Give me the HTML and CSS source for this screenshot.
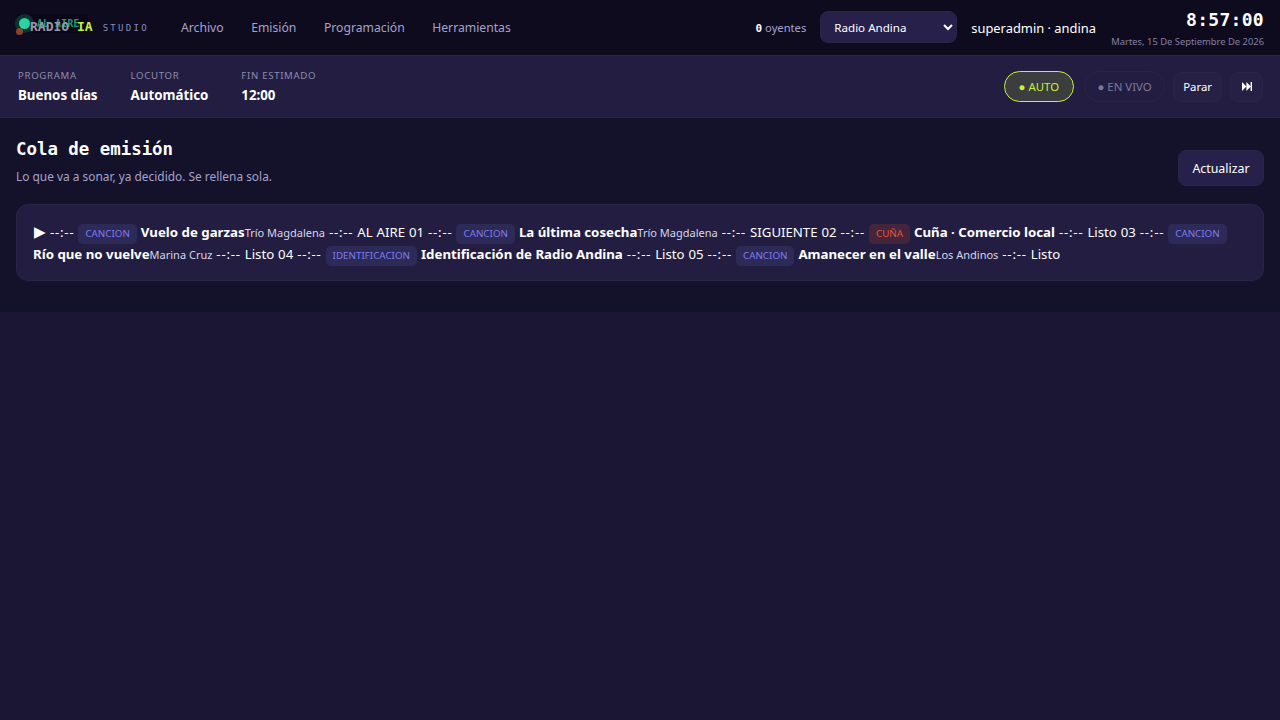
FILE: index.html
```html
<!DOCTYPE html>
<html lang="es">
<head>
<meta charset="utf-8">
<title>Radio IA Studio</title>
<link rel="stylesheet" href="styles.css">
</head>
<body>
<header class="top">
  <div class="brand">
    <div class="onair"><span class="onair-dot"></span><span class="onair-text">AL AIRE</span></div>
    <span class="orange-dot"></span>
    <span class="logo">RADIO <em>IA</em></span>
    <span class="studio">STUDIO</span>
  </div>
  <nav class="nav"><a>Archivo</a><a>Emisión</a><a>Programación</a><a>Herramientas</a></nav>
  <div class="top-right">
    <span class="listeners"><b>0</b> oyentes</span>
    <select class="station"><option>Radio Andina</option></select>
    <span class="user">superadmin · andina</span>
    <div class="clock"><div class="time">8:57:00</div><div class="date">Martes, 15 De Septiembre De 2026</div></div>
  </div>
</header>
<section class="status">
  <div class="metas">
    <div class="meta"><span class="label">PROGRAMA</span><strong>Buenos días</strong></div>
    <div class="meta"><span class="label">LOCUTOR</span><strong>Automático</strong></div>
    <div class="meta"><span class="label">FIN ESTIMADO</span><strong>12:00</strong></div>
  </div>
  <div class="controls">
    <button class="pill auto">● AUTO</button>
    <button class="pill live">● EN VIVO</button>
    <button class="ctl">Parar</button>
    <button class="ctl skip" aria-label="Saltar"><svg class="skip-icon" viewBox="0 0 10 9" aria-hidden="true"><path d="M0 0L4.4 4.5L0 9Z M4.4 0L8.8 4.5L4.4 9Z M8.6 0H10V9H8.6Z"/></svg></button>
  </div>
</section>
<main class="main">
  <div class="head">
    <div>
      <h1>Cola de emisión</h1>
      <p>Lo que va a sonar, ya decidido. Se rellena sola.</p>
    </div>
    <button class="refresh">Actualizar</button>
  </div>
  <div class="queue">
    <span class="play">▶</span> <span class="t">--:--</span> <span class="tag">CANCION</span> <strong>Vuelo de garzas</strong><small>Trío Magdalena</small> <span class="t">--:--</span> AL AIRE 01 <span class="t">--:--</span> <span class="tag">CANCION</span> <strong>La última cosecha</strong><small>Trío Magdalena</small> <span class="t">--:--</span> SIGUIENTE 02 <span class="t">--:--</span> <span class="tag red">CUÑA</span> <strong>Cuña · Comercio local</strong> <span class="t">--:--</span> Listo 03 <span class="t">--:--</span> <span class="tag">CANCION</span> <strong>Río que no vuelve</strong><small>Marina Cruz</small> <span class="t">--:--</span> Listo 04 <span class="t">--:--</span> <span class="tag">IDENTIFICACION</span> <strong>Identificación de Radio Andina</strong> <span class="t">--:--</span> Listo 05 <span class="t">--:--</span> <span class="tag">CANCION</span> <strong>Amanecer en el valle</strong><small>Los Andinos</small> <span class="t">--:--</span> Listo
  </div>
</main>
</body>
</html>
```
FILE: styles.css
```css
* { box-sizing: border-box; }
html, body { margin: 0; height: 100%; }
body {
  background: #1a1633;
  color: #fff;
  font-family: "Noto Sans", sans-serif;
  font-size: 13px;
  overflow: hidden;
}
.top {
  height: 56px;
  display: flex;
  align-items: center;
  padding: 0 16px;
  background: #0e0b1f;
  border-bottom: 1px solid #2a2545;
}
.brand { position: relative; display: flex; align-items: baseline; width: 137px; flex: none; padding-left: 14px; margin-bottom: 2px; }
.onair {
  position: absolute;
  left: 0;
  top: -5px;
  width: 72px;
  height: 19px;
  display: flex;
  align-items: center;
  gap: 7px;
  padding-left: 3px;
  background: rgba(0,0,0,.25);
  border-radius: 4px;
}
.onair-dot { width: 11px; height: 11px; border-radius: 50%; background: #2dd4a0; box-shadow: 0 0 0 4px rgba(45,212,160,.2); flex: none; }
.onair-text { font: 700 9.6px "DejaVu Sans Mono", monospace; letter-spacing: .3px; color: #1f9a76; }
.orange-dot { position: absolute; left: 0; top: 9px; width: 7px; height: 7px; border-radius: 50%; background: #a5502f; opacity: .8; }
.logo { position: relative; font: 700 13px "DejaVu Sans Mono", monospace; color: #9a97ab; white-space: pre; }
.logo em { font-style: normal; color: #c8f135; }
.studio { font: 400 9px "DejaVu Sans Mono", monospace; letter-spacing: 2.3px; color: #8d8ab8; margin-left: 10px; }
.nav { display: flex; gap: 27.5px; margin-left: 28px; }
.nav a { color: #a7a2cc; font-size: 12.2px; }
.top-right { margin-left: auto; display: flex; align-items: center; }
.listeners { font-size: 11.2px; color: #a7a2cc; }
.listeners b { font-family: "DejaVu Sans Mono", monospace; font-size: 11px; color: #fff; }
.station {
  margin-left: 14px;
  margin-bottom: 1px;
  width: 137px;
  height: 32px;
  padding: 0 9px;
  background: #26204a;
  border: 1px solid #2a2545;
  border-radius: 8px;
  color: #fff;
  font: 11.6px "Noto Sans", sans-serif;
}
.user { margin-left: 14px; font-size: 12.9px; }
.clock { margin-left: 14px; text-align: right; width: 154px; margin-top: 3px; }
.time { font: 700 18px/20px "DejaVu Sans Mono", monospace; letter-spacing: .3px; }
.date { font-size: 9.4px; line-height: 13px; color: #8380a3; margin-top: 5px; white-space: nowrap; }
.status {
  height: 62px;
  display: flex;
  align-items: center;
  justify-content: space-between;
  padding: 0 17px 0 18px;
  background: #231e41;
  border-bottom: 1px solid #2a2545;
}
.metas { display: flex; gap: 33px; }
.meta { display: flex; flex-direction: column; gap: 3px; }
.label { font-size: 9.6px; letter-spacing: .7px; line-height: 14px; color: #8f8bb0; }
.meta strong { font-size: 13.3px; font-weight: 700; line-height: 19px; }
.controls { display: flex; align-items: center; gap: 8px; }
button { font-family: inherit; color: #fff; cursor: pointer; }
.pill { height: 31px; border-radius: 16px; font-size: 11.4px; padding: 0 14px; background: transparent; border: 1px solid #2a2545; }
.auto { color: #c8f135; border-color: #c8f135; background: rgba(200,241,53,.15); }
.live { color: #7c7899; border-color: #2a2545; margin-left: 2px; padding: 0 12.5px; }
.ctl { height: 30px; border-radius: 8px; background: #262045; border: 1px solid #2a2545; font-size: 11.4px; padding: 0 9px; }
.skip { width: 33px; padding: 0; display: flex; align-items: center; justify-content: center; }
.skip-icon { width: 10px; height: 9px; fill: #fff; }
.main { height: 194px; padding: 20px 16px; background: #14112a; }
.head { display: flex; justify-content: space-between; align-items: flex-end; }
h1 { margin: 1px 0 0; font: 700 17.4px/21px "DejaVu Sans Mono", monospace; }
p { margin: 7px 0 1px; font-size: 11.9px; line-height: 18px; color: #a7a2cc; }
.refresh { height: 36px; width: 86px; padding: 0; font-size: 12.4px; background: #26204a; border: 1px solid #2a2545; border-radius: 8px; }
.queue {
  margin-top: 18px;
  padding: 16px 16px 15px;
  background: #231e41;
  border: 1px solid #2a2545;
  border-radius: 12px;
  font-size: 13.2px;
  line-height: 22px;
  word-spacing: .5px;
}
.play { font-size: 15px; line-height: 1; padding-left: 1px; }
.t { letter-spacing: .8px; }
.queue strong { font-weight: 700; font-size: 13.25px; line-height: 1; word-spacing: 0; }
.queue small { font-size: 11px; line-height: 1; color: #d8d5ea; word-spacing: 0; }
.tag {
  display: inline-block;
  margin: -2px 0;
  padding: 0 7px;
  line-height: 20px;
  height: 20px;
  font-size: 9.8px;
  color: #7c7cf0;
  background: #2e2a58;
  border-radius: 5px;
}
.tag.red { color: #e5533d; background: #43263c; }
```
